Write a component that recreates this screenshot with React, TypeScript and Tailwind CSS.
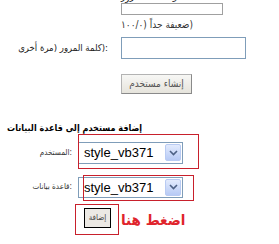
import React from "react";

const arabic = "font-['DejaVu_Sans_Condensed','DejaVu_Sans',sans-serif]";

const SelectBox: React.FC<{ value: string; className?: string }> = ({ value, className }) => (
  <div
    className={`flex items-center justify-between w-[105px] border border-[#7f9db9] bg-white pl-[5px] pr-[1px] ${className ?? ""}`}
  >
    <span className="font-['Liberation_Sans',Arial,sans-serif] text-[13px] text-black leading-none">{value}</span>
    <span className="flex items-center justify-center w-[16px] h-[17px] rounded-[2px] border border-[#b9cbf3] bg-gradient-to-b from-[#e3ebfd] to-[#b7caf5]">
      <svg width="9" height="6" viewBox="0 0 9 6">
        <path d="M1 1 L4.5 4.5 L8 1" fill="none" stroke="#4d6185" strokeWidth="1.6" />
      </svg>
    </span>
  </div>
);

export default function App() {
  return (
    <div className="w-[279px] h-[244px] bg-white overflow-hidden relative text-[#222]">
      {/* clipped label of the previous row */}
      <div className="h-[3px] overflow-hidden pl-[121px]">
        <div className={`${arabic} text-[10px] leading-[12px] -mt-[9px]`}>قوة   كلمة المرور</div>
      </div>

      {/* strength meter */}
      <div className="ml-[121px] w-[102px] h-[12px] border border-[#a0a0a0] bg-white" />
      <div className={`ml-[121px] mt-[3px] h-[13px] ${arabic} text-[10px] leading-[13px] text-[#333]`} dir="ltr">
        ۱۰۰/۰) <bdi>ضعيفة جداً</bdi>)
      </div>

      {/* password again */}
      <div className="flex items-center mt-[6px]">
        <div className={`w-[121px] pr-[13px] text-right ${arabic} text-[9.5px] text-[#222]`} dir="ltr">
          <bdi>مرة أخرى</bdi>) <bdi>كلمة المرور</bdi>):
        </div>
        <div className="w-[125px] h-[22px] border border-[#7f9db9] bg-white" />
      </div>

      <div className="ml-[121px] mt-[10px]">
        <button
          className={`w-[71px] h-[20px] border border-[#b3b3b3] border-r-[#8a8a8a] border-b-[#8a8a8a] bg-gradient-to-b from-[#f7f7f5] to-[#e6e4dc] ${arabic} text-[10px] text-[#555]`}
        >
          إنشاء مستخدم
        </button>
      </div>

      {/* add user to database */}
      <div className={`mt-[28px] pl-[7px] ${arabic} text-[9px] font-bold leading-[12px] text-black`}>
        إضافة مستخدم إلى قاعدة البيانات
      </div>

      <div className="flex items-center mt-[8px] relative">
        <div className={`w-[78px] pr-[6px] text-right ${arabic} text-[8px] text-[#333]`} dir="ltr">
          المستخدم:
        </div>
        <SelectBox value="style_vb371" className="h-[22px]" />
        <div className="absolute left-[78px] top-[-8px] w-[121px] h-[35px] border border-[#c8202c]" />
      </div>

      <div className="flex items-center mt-[13px] relative">
        <div className={`w-[78px] pr-[6px] text-right ${arabic} text-[8px] text-[#333]`} dir="ltr">
          قاعدة بيانات:
        </div>
        <SelectBox value="style_vb371" className="h-[21px]" />
        <div className="absolute left-[83px] top-[-2px] w-[111px] h-[26px] border border-[#c8202c]" />
      </div>

      <div className="flex items-center mt-[10px] relative">
        <div className="w-[84px]" />
        <button
          className={`w-[27px] h-[20px] border border-black bg-[#ece9e4] ${arabic} text-[8px] text-[#444] leading-none`}
        >
          إضافة
        </button>
        <span className={`ml-[10px] mt-[5px] ${arabic} text-[15px] font-bold text-[#e0242c] leading-none`}>
          اضغط هنا
        </span>
        <div className="absolute left-[75px] top-[-4px] w-[44px] h-[31px] border border-[#c8202c]" />
      </div>
    </div>
  );
}
